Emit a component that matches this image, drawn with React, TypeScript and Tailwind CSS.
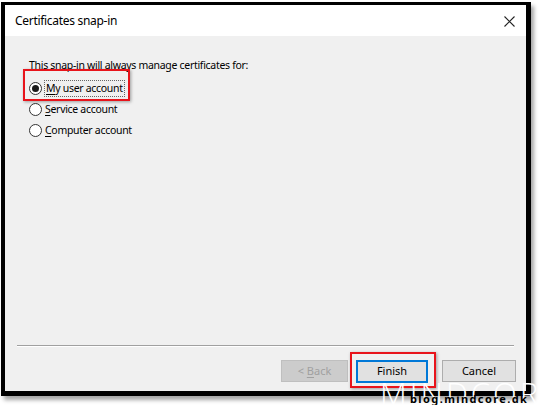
import React from "react";

const font = { fontFamily: '"Noto Sans", "Open Sans", sans-serif' };

const Radio = ({
  checked,
  label,
  accel,
  focused,
}: {
  checked?: boolean;
  label: string;
  accel: string;
  focused?: boolean;
}) => {
  const rest = label.slice(accel.length);
  return (
    <div className="flex h-[21px] items-center">
      <span className="flex h-[13px] w-[13px] items-center justify-center rounded-full border border-[#333] bg-white">
        {checked ? <span className="h-[7px] w-[7px] rounded-full bg-[#1a1a1a]" /> : null}
      </span>
      <span
        className={
          focused
            ? "ml-[2px] border border-dotted border-[#666] px-[1px] leading-[15px]"
            : "ml-[3px] leading-[15px]"
        }
      >
        <span className="underline underline-offset-2">{accel}</span>
        {rest}
      </span>
    </div>
  );
};

export default function App() {
  return (
    <div
      className="relative h-[405px] w-[539px] overflow-hidden bg-white pl-[1px] pt-[2px] text-[11px] text-black"
      style={font}
    >
      <div className="flex h-[394px] w-[530px] flex-col border-b-[5px] border-l-[4px] border-r-[5px] border-t-[3px] border-black shadow-[3px_4px_4px_rgba(0,0,0,0.35)]">
        <div className="flex h-[31px] items-center justify-between bg-white pl-[10px] pr-[11px]">
          <span className="text-[12px] tracking-[-0.3px]">Certificates snap-in</span>
          <svg width="11" height="11" viewBox="0 0 11 11" className="mt-[1px]">
            <path d="M0.5 0.5 L10.5 10.5 M10.5 0.5 L0.5 10.5" stroke="#222" strokeWidth="1.1" />
          </svg>
        </div>
        <div className="flex flex-1 flex-col bg-[#f0f0f0]">
          <div className="pl-[24px] pt-[22px] text-[10.5px]">
            <div className="leading-[15px] tracking-[-0.3px]">
              This snap-in will always manage certificates for:
            </div>
            <div className="mt-[5px] flex flex-col tracking-[-0.3px]">
              <Radio checked focused label="My user account" accel="M" />
              <Radio label="Service account" accel="S" />
              <Radio label="Computer account" accel="C" />
            </div>
          </div>
          <div className="flex-1" />
          <div className="mx-[12px] h-[2px] border-b border-t border-b-white border-t-[#a0a0a0]" />
          <div className="flex justify-end pb-[8px] pr-[10px] pt-[13px]">
            <div className="flex h-[22px] w-[67px] items-center justify-center border border-[#bfbfbf] bg-[#cccccc] text-[#a0a0a0]">
              &lt;&nbsp;<span className="underline underline-offset-2">B</span>ack
            </div>
            <div className="ml-[8px] flex h-[23px] w-[72px] items-center justify-center border-2 border-[#0078d7] bg-[#e1e1e1]">
              Finish
            </div>
            <div className="ml-[14px] flex h-[22px] w-[74px] items-center justify-center border border-[#adadad] bg-[#e1e1e1]">
              Cancel
            </div>
          </div>
        </div>
      </div>

      {/* annotation boxes */}
      <div className="absolute left-[23px] top-[69px] h-[32px] w-[107px] border-2 border-[#e8141b] shadow-[1px_1px_3px_rgba(0,0,0,0.35)]" />
      <div className="absolute left-[350px] top-[352px] h-[36px] w-[86px] border-2 border-[#e8141b] shadow-[1px_1px_3px_rgba(0,0,0,0.35)]" />

      {/* watermark */}
      <div
        className="absolute left-[380px] top-[378px] whitespace-nowrap text-[31px] font-light leading-none tracking-[3px] text-white"
        style={{ fontFamily: '"Open Sans", "Noto Sans", sans-serif' }}
      >
        MINDCORE
      </div>
      <div className="absolute left-[410px] top-[393px] whitespace-nowrap text-[11px] font-bold leading-none tracking-[1.4px] text-black">
        blog.mindcore.dk
      </div>
    </div>
  );
}
